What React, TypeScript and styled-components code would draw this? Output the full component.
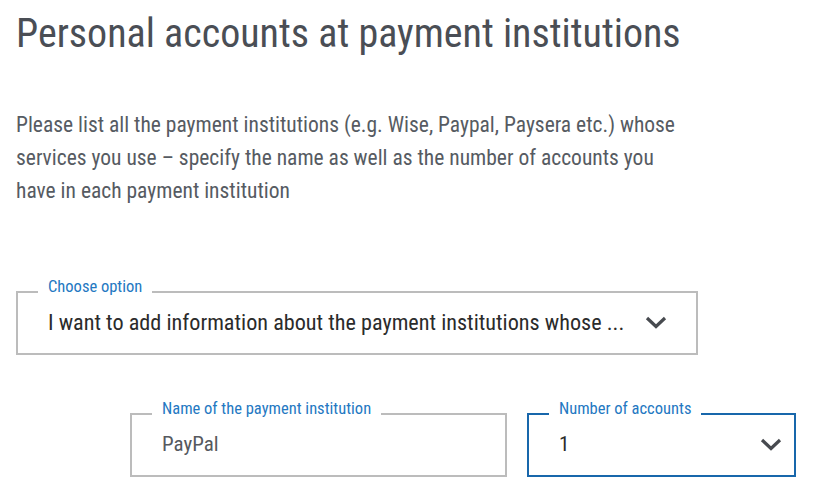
import React from 'react';
import styled, { createGlobalStyle } from 'styled-components';

const GlobalStyle = createGlobalStyle`
  body {
    margin: 0;
    background: #fff;
    font-family: "Roboto Condensed", "Liberation Sans", sans-serif;
  }
`;

const Page = styled.div`
  padding: 10px 0 0 16px;
`;

const Title = styled.h1`
  margin: 0;
  font-size: 40px;
  line-height: 48px;
  font-weight: 400;
  color: #4a4e55;
`;

const Intro = styled.p`
  margin: 50px 0 0;
  width: 680px;
  font-size: 21.5px;
  line-height: 33px;
  color: #565b62;
`;

const Field = styled.fieldset<{ $width: number; $active?: boolean }>`
  box-sizing: border-box;
  width: ${(p) => p.$width}px;
  margin: 0;
  padding: 0 0 14px 30px;
  border: 2px solid ${(p) => (p.$active ? '#1867ab' : '#bcbcbc')};
  min-width: 0;
`;

const Label = styled.legend`
  margin-left: -10px;
  padding: 0 10px 10px;
  font-size: 16.5px;
  line-height: 16px;
  color: #2478c2;
`;

const Control = styled.div<{ $gap: number }>`
  display: flex;
  align-items: center;
  height: 34px;
  padding-right: ${(p) => p.$gap}px;
`;

const Value = styled.span<{ $muted?: boolean; $size?: number }>`
  flex: 1;
  font-size: ${(p) => p.$size ?? 21}px;
  white-space: nowrap;
  overflow: hidden;
  text-overflow: ellipsis;
  color: ${(p) => (p.$muted ? '#56595e' : '#2b2b2b')};
`;

const Chevron = styled.svg`
  flex: none;
  width: 22px;
  height: 13px;
`;

const OptionBlock = styled.div`
  margin-top: 72px;
`;

const AccountRow = styled.div`
  display: flex;
  gap: 20px;
  margin-top: 46px;
  padding-left: 114px;
`;

function ChevronDown() {
  return (
    <Chevron viewBox="0 0 22 13">
      <polyline points="2,2 11,10.5 20,2" fill="none" stroke="#474a4f" strokeWidth="3.2" />
    </Chevron>
  );
}

export default function App() {
  return (
    <>
      <GlobalStyle />
      <Page>
        <Title>Personal accounts at payment institutions</Title>
        <Intro>
          Please list all the payment institutions (e.g. Wise, Paypal, Paysera etc.) whose services you use – specify the
          name as well as the number of accounts you have in each payment institution
        </Intro>
        <OptionBlock>
          <Field $width={682}>
            <Label>Choose option</Label>
            <Control $gap={29}>
              <Value $size={22.2}>I want to add information about the payment institutions whose ...</Value>
              <ChevronDown />
            </Control>
          </Field>
        </OptionBlock>
        <AccountRow>
          <Field $width={377}>
            <Label>Name of the payment institution</Label>
            <Control $gap={0}>
              <Value $muted>PayPal</Value>
            </Control>
          </Field>
          <Field $width={269} $active>
            <Label>Number of accounts</Label>
            <Control $gap={12}>
              <Value>1</Value>
              <ChevronDown />
            </Control>
          </Field>
        </AccountRow>
      </Page>
    </>
  );
}
